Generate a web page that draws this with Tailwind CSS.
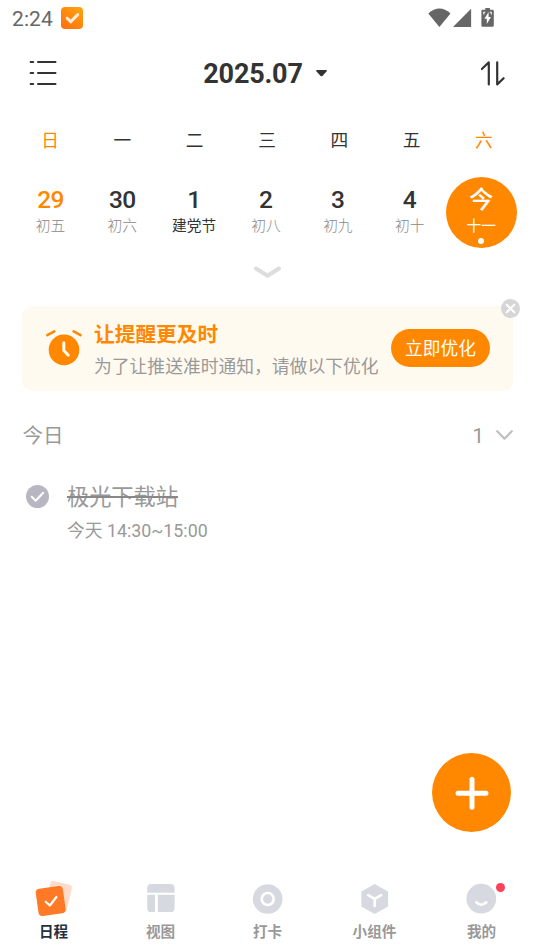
<!DOCTYPE html>
<html lang="zh-CN">
<head>
<meta charset="utf-8">
<title>日程</title>
<script src="https://cdn.jsdelivr.net/npm/@tailwindcss/browser@4"></script>
</head>
<body class="bg-white">
<div class="relative flex h-[951px] w-[535px] flex-col overflow-hidden bg-white font-['Roboto','Noto_Sans_CJK_SC',sans-serif] text-[#333333]">

  <!-- Status bar -->
  <div class="flex h-9 shrink-0 items-center pl-3 pr-[41px]">
    <span class="w-[49px] pt-px text-[21px] leading-9 tracking-[0.1px] text-[#666666]">2:24</span>
    <svg class="h-[22px] w-[22px]" viewBox="0 0 22 22"><defs><linearGradient id="appGradient" x1="1" y1="0" x2="0.3" y2="1"><stop stop-color="#ffa60d"/><stop offset="1" stop-color="#ff730f"/></linearGradient></defs><rect width="22" height="22" rx="4" fill="url(#appGradient)"/><path d="M6.2 11.2l3.5 3.6 7-7.2" fill="none" stroke="#ffeedd" stroke-width="3" stroke-linecap="round" stroke-linejoin="round"/></svg>
    <svg class="ml-auto h-[20px] w-[66px]" viewBox="0 0 66 20" fill="#666666"><path d="M0.3 5.4Q11.5-4.6 22.5 5.4L11.4 18.9Z"/><path d="M43.1 0.8V19H25Z"/><path fill-rule="evenodd" d="M57.3 0h4.6v1.8h2.6q1.3 0 1.3 1.3v14.4q0 1.3-1.3 1.3h-9.8q-1.3 0-1.3-1.3V3.1q0-1.3 1.3-1.3h2.6ZM60.6 4.1l-4.2 6.7h2.4v5.1l4.2-6.8h-2.4Z"/><path d="M55.3 3.7h2v1.1h-1v1.8h-1zM61.8 3.7h2v2.9h-1V4.8h-1z" fill="#fff"/></svg>
  </div>

  <!-- Month header -->
  <div class="flex h-[76px] shrink-0 items-center justify-between pl-[29px] pr-[30px]">
    <svg class="h-7 w-7" viewBox="0 0 28 28" stroke="#333333" stroke-width="2" stroke-linecap="round"><path d="M1.6 2h2.6M9 2h17.5M1.6 13h2.6M9 13h17.5M1.6 24h2.6M9 24h17.5"/></svg>
    <div class="flex items-center gap-[13px] pr-[8px]">
      <span class="text-[27px] font-bold leading-8 tracking-[-0.2px]">2025.07</span>
      <svg class="-mt-[2px] h-[7px] w-[11px]" viewBox="0 0 11 7"><path d="M1 0h9q1.6.2.5 1.6L6.6 5.7q-1.1 1-2.2 0L.5 1.6Q-.6.2 1 0Z" fill="#333333"/></svg>
    </div>
    <svg class="h-[26px] w-6" viewBox="0 0 24 26" fill="none" stroke="#333333" stroke-width="2.2" stroke-linecap="round" stroke-linejoin="round"><path d="M0.8 8L7.8 1.4V23.4M16.2 1.4V23.4L22.6 17.2"/></svg>
  </div>

  <!-- Weekdays -->
  <div class="grid h-[54px] shrink-0 grid-cols-7 pl-[14px] pr-[15px] text-center text-[17.7px] leading-[58px]">
    <span class="text-[#ff8800]">日</span><span>一</span><span>二</span><span>三</span><span>四</span><span>五</span><span class="text-[#ff8800]">六</span>
  </div>

  <!-- Dates -->
  <div class="mt-[11px] grid h-[71px] shrink-0 grid-cols-7 pl-[14.5px] pr-[17.5px] text-center text-[14.7px] font-light text-[#888888]">
    <div class="flex flex-col pt-[9px]"><b class="text-[24.5px] font-medium leading-7 tracking-[-0.7px] text-[#ff8800]">29</b><span class="leading-6">初五</span></div>
    <div class="flex flex-col pt-[9px]"><b class="text-[24.5px] font-medium leading-7 tracking-[-0.7px] text-[#333333]">30</b><span class="leading-6">初六</span></div>
    <div class="flex flex-col pt-[9px]"><b class="text-[24.5px] font-medium leading-7 text-[#333333]">1</b><span class="font-normal leading-6 text-[#333333]">建党节</span></div>
    <div class="flex flex-col pt-[9px]"><b class="text-[24.5px] font-medium leading-7 text-[#333333]">2</b><span class="leading-6">初八</span></div>
    <div class="flex flex-col pt-[9px]"><b class="text-[24.5px] font-medium leading-7 text-[#333333]">3</b><span class="leading-6">初九</span></div>
    <div class="flex flex-col pt-[9px]"><b class="text-[24.5px] font-medium leading-7 text-[#333333]">4</b><span class="leading-6">初十</span></div>
    <div class="flex h-[71px] w-[71px] flex-col items-center rounded-full bg-[#ff8800] pt-[9px] text-white"><b class="text-[24px] font-medium leading-7">今</b><span class="font-normal leading-6">十一</span><i class="h-[6px] w-[6px] shrink-0 rounded-full bg-white"></i></div>
  </div>

  <!-- Expand handle -->
  <div class="flex h-[58px] shrink-0 justify-center pt-[18px]">
    <svg class="h-[13px] w-[28px]" viewBox="0 0 28 13" fill="none" stroke="#dddddd" stroke-width="4" stroke-linecap="round" stroke-linejoin="round"><path d="M2 2.5L13.5 9.8L25 2.5"/></svg>
  </div>

  <!-- Reminder banner -->
  <div class="relative ml-[22px] flex h-[85px] w-[491px] shrink-0 items-center rounded-[10px] bg-[#fffaf0] pl-6 pr-[23px]">
    <svg class="-mt-[2px] h-9 w-9" viewBox="0 0 36 36" fill="none" stroke-linecap="round" stroke-linejoin="round"><path d="M1.3 5.2L8.3 1.3M27.6 1.3L34.5 5.2" stroke="#ff8800" stroke-width="2.5"/><circle cx="18" cy="19.9" r="15.3" fill="#ff8800"/><path d="M17.8 12.8V20.5L22.3 25.2" stroke="#fffaf0" stroke-width="3"/></svg>
    <div class="ml-[12px] flex flex-col pt-[4px]">
      <span class="text-[20.7px] font-bold leading-8 text-[#ff8800]">让提醒更及时</span>
      <span class="whitespace-nowrap text-[17.8px] leading-8 text-[#999999]">为了让推送准时通知，请做以下优化</span>
    </div>
    <button class="-mt-px ml-auto h-[38px] w-[99px] shrink-0 rounded-full bg-[#ff8800] pt-[2px] text-[17.7px] text-white">立即优化</button>
    <svg class="absolute -right-[7px] -top-[7px] h-[19px] w-[19px]" viewBox="0 0 19 19"><circle cx="9.5" cy="9.5" r="9.5" fill="#d6d6d6"/><path d="M5.6 5.6l7.8 7.8M13.4 5.6l-7.8 7.8" stroke="#fff" stroke-width="2" stroke-linecap="round"/></svg>
  </div>

  <!-- Today section -->
  <div class="mt-6 flex h-10 shrink-0 items-center pl-[22.5px] pr-[22px] text-[20.5px] text-[#999999]">
    <span class="pt-[2px]">今日</span><span class="ml-auto pt-[2px]">1</span>
    <svg class="ml-[12px] h-[11px] w-[17px]" viewBox="0 0 17 11" fill="none" stroke="#bfbfbf" stroke-width="2.2" stroke-linecap="round" stroke-linejoin="round"><path d="M1.2 1.2L8.5 8.7L15.8 1.2"/></svg>
  </div>
  <div class="mt-[22px] flex shrink-0 pl-[26px]">
    <svg class="mt-[8px] h-[23px] w-[23px]" viewBox="0 0 23 23"><circle cx="11.5" cy="11.5" r="11.5" fill="#b9b6c4"/><path d="M5.7 11.7l4 4 7.5-8" fill="none" stroke="#fff" stroke-width="2" stroke-linecap="round" stroke-linejoin="round"/></svg>
    <div class="ml-[18px] flex flex-col pt-px text-[#999999]">
      <span class="relative text-[22.2px] leading-[38px]"><s class="no-underline">极光下载站</s><i class="absolute left-0 top-[18px] h-[1.5px] w-[111px] bg-[#888888]"></i></span>
      <span class="text-[17.8px] leading-[30px]">今天 14:30~15:00</span>
    </div>
  </div>

  <!-- Add button -->
  <button class="absolute left-[432px] top-[753px] flex h-[79px] w-[79px] items-center justify-center rounded-full bg-[#ff8800]">
    <svg class="h-[34px] w-[34px]" viewBox="0 0 34 34" stroke="#fff" stroke-width="5" stroke-linecap="round"><path d="M17 3.3v28M3 17.3h28"/></svg>
  </button>

  <!-- Tab bar -->
  <nav class="mt-auto grid h-[75px] shrink-0 grid-cols-5 text-center text-[14.6px] font-bold text-[#999999]">
    <div class="flex flex-col items-center">
      <svg class="mt-1 h-[38px] w-[38px]" viewBox="0 0 38 38"><rect x="12.7" y="2.7" width="22" height="27" rx="3" fill="#ffdcc8" transform="rotate(13 23.7 16.2)"/><rect x="2" y="7.3" width="27.4" height="27.4" rx="4" fill="#ff7926" transform="rotate(-8 15.7 21)"/><path d="M10.7 21.7l4.2 3.8 6.5-8.5" fill="none" stroke="#fff" stroke-width="2.2" stroke-linecap="round" stroke-linejoin="round"/></svg>
      <span class="leading-[28px] text-[#263040]">日程</span>
    </div>
    <div class="flex flex-col items-center">
      <svg class="mt-1 h-[38px] w-[38px]" viewBox="0 0 38 38" fill="#d6dae0"><path d="M5.2 12.8V8.2q0-4.2 4.2-4.2h19q4.2 0 4.2 4.2v4.6zM5.2 14.8h7.8v17.3H9.4q-4.2 0-4.2-4.2zM15.8 14.8h16.8v13.1q0 4.2-4.2 4.2H15.8z"/></svg>
      <span class="leading-[28px]">视图</span>
    </div>
    <div class="flex flex-col items-center">
      <svg class="mt-1 h-[38px] w-[38px]" viewBox="0 0 38 38"><circle cx="18.7" cy="19" r="14.8" fill="#d6dae0"/><circle cx="18.7" cy="19" r="6" fill="none" stroke="#fff" stroke-width="2.6"/></svg>
      <span class="leading-[28px]">打卡</span>
    </div>
    <div class="flex flex-col items-center">
      <svg class="mt-1 h-[38px] w-[38px]" viewBox="0 0 38 38"><path d="M18.7 5.2L31.1 12.2V25.8L18.7 32.8L6.3 25.8V12.2Z" fill="#d6dae0" stroke="#d6dae0" stroke-width="2" stroke-linejoin="round"/><path d="M12.3 15.2L18.7 18.9L25.1 15.2M18.7 18.9V26" fill="none" stroke="#fff" stroke-width="2.6" stroke-linecap="round"/></svg>
      <span class="leading-[28px]">小组件</span>
    </div>
    <div class="relative flex flex-col items-center">
      <svg class="mt-1 h-[38px] w-[38px]" viewBox="0 0 38 38"><circle cx="18.3" cy="18.7" r="14.9" fill="#d6dae0"/><path d="M13.3 22.3Q18.3 27.2 23.3 22.3" fill="none" stroke="#fff" stroke-width="2.6" stroke-linecap="round"/></svg>
      <span class="leading-[28px]">我的</span>
      <i class="absolute left-[68px] top-[7px] h-[9px] w-[9px] rounded-full bg-[#fc4158]"></i>
    </div>
  </nav>
</div>
</body>
</html>
